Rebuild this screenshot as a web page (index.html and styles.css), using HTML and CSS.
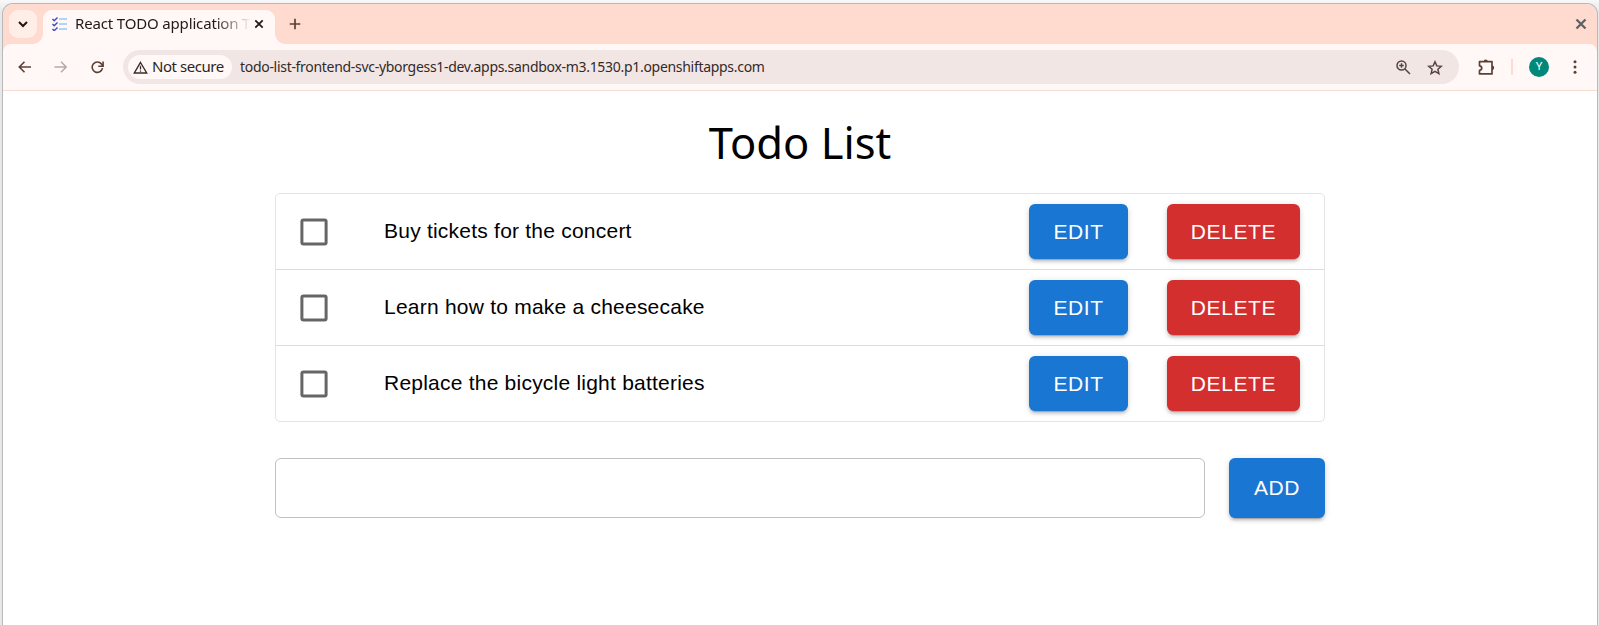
FILE: index.html
```
<!DOCTYPE html>
<html lang="en">
<head>
<meta charset="utf-8">
<title>React TODO application</title>
<link rel="stylesheet" href="styles.css">
</head>
<body>
<div class="window">
  <header class="tabs">
    <button class="tab-search" aria-label="Search tabs"><svg width="10" height="8" viewBox="0 0 10 8"><path d="M1 2l4 4 4-4" fill="none" stroke="#201512" stroke-width="2"/></svg></button>
    <div class="tab">
      <svg class="favicon" width="15" height="14" viewBox="0 0 15 14" fill="none"><path d="M.5 2l1.7 1.7L5.5.5M.5 7l1.7 1.7L5.5 5.5M.5 12l1.7 1.7 3.3-3.2" stroke="#4048b8" stroke-width="1.4"/><path d="M7 2h8M7 7h8M7 12h8" stroke="#90caf9" stroke-width="1.5"/></svg>
      <span class="tab-title">React TODO application T</span>
      <svg width="10" height="10" viewBox="0 0 10 10"><path d="M1.3 1.3l7.4 7.4m0-7.4L1.3 8.7" stroke="#201a19" stroke-width="1.8"/></svg>
    </div>
    <svg class="plus" width="12" height="12" viewBox="0 0 12 12"><path d="M6 .7v10.6M.7 6h10.6" stroke="#5c4037" stroke-width="1.7"/></svg>
    <svg class="close" width="12" height="12" viewBox="0 0 12 12"><path d="M1.5 1.5l9 9m0-9l-9 9" stroke="#5e6163" stroke-width="2.3"/></svg>
  </header>
  <nav class="toolbar">
    <svg class="back" width="14" height="12" viewBox="0 0 14 12"><path d="M13 6H2M6.5.8L1.3 6l5.2 5.2" fill="none" stroke="#5c4037" stroke-width="1.6"/></svg>
    <svg class="forward" width="14" height="12" viewBox="0 0 14 12"><path d="M.5 6h11.8M7 .8L12.2 6 7 11.2" fill="none" stroke="#b8a9a5" stroke-width="1.5"/></svg>
    <svg class="reload" width="13" height="13" viewBox="0 0 13 13"><path d="M11.5 7.2A5.2 5.2 0 1 1 10.5 3L12 4.8M12.1.5v4.7H7.3" fill="none" stroke="#5c4037" stroke-width="1.6"/></svg>
    <div class="address">
      <span class="security"><svg width="15" height="13" viewBox="0 0 15 13"><path d="M7.5 1.5L13.7 12H1.3z" fill="none" stroke="#3b2c28" stroke-width="1.4"/><path d="M7.5 4.8v3.7m0 1v1.3" stroke="#3b2c28" stroke-width="1.3"/></svg><span class="security-text">Not secure</span></span>
      <span class="url">todo-list-frontend-svc-yborgess1-dev.apps.sandbox-m3.1530.p1.openshiftapps.com</span>
      <svg class="magnifier" width="15" height="15" viewBox="0 0 15 15" fill="none" stroke="#554440" stroke-width="1.5"><circle cx="5.5" cy="5.5" r="4.5"/><path d="M9 9l5 5M3.2 5.5h4.6M5.5 3.2v4.6"/></svg>
      <svg width="16" height="15" viewBox="0 0 16 15"><path d="M8 1.8l1.8 4.1 4.5.4-3.4 3 1 4.3L8 11.3l-3.9 2.3 1-4.3-3.4-3 4.5-.4z" fill="none" stroke="#554440" stroke-width="1.5"/></svg>
    </div>
    <svg class="puzzle" width="17" height="16" viewBox="0 0 17 16"><path d="M1.5 2.7H14V14.9H1.5v-3.5c3-.4 3-4.2 0-4.6z" fill="none" stroke="#5c4037" stroke-width="1.7" stroke-linejoin="round"/><path d="M5.6 2.5a2.1 2.1 0 0 1 4.2 0zM14 6.6a2.2 2.2 0 0 1 0 4.4z" fill="#5c4037"/></svg>
    <span class="separator"></span>
    <span class="avatar">Y</span>
    <svg class="dots" width="4" height="14" viewBox="0 0 4 14" fill="#5c4037"><circle cx="2" cy="1.7" r="1.5"/><circle cx="2" cy="7" r="1.5"/><circle cx="2" cy="12.3" r="1.5"/></svg>
  </nav>
  <main class="page">
    <h1 class="title">Todo List</h1>
    <section class="list">
      <div class="row"><svg class="checkbox" width="28" height="28" viewBox="0 0 28 28"><rect x="1.9" y="1.9" width="24.2" height="24.2" rx="1.5"/></svg><span class="task">Buy tickets for the concert</span><button class="button">EDIT</button><button class="button delete">DELETE</button></div>
      <div class="row"><svg class="checkbox" width="28" height="28" viewBox="0 0 28 28"><rect x="1.9" y="1.9" width="24.2" height="24.2" rx="1.5"/></svg><span class="task">Learn how to make a cheesecake</span><button class="button">EDIT</button><button class="button delete">DELETE</button></div>
      <div class="row"><svg class="checkbox" width="28" height="28" viewBox="0 0 28 28"><rect x="1.9" y="1.9" width="24.2" height="24.2" rx="1.5"/></svg><span class="task">Replace the bicycle light batteries</span><button class="button">EDIT</button><button class="button delete">DELETE</button></div>
    </section>
    <form class="new-task"><input class="input" type="text" aria-label="New task"><button class="button add" type="button">ADD</button></form>
  </main>
</div>
</body>
</html>
```
FILE: styles.css
```
* { box-sizing: border-box; }
body { margin: 0; height: 625px; padding: 4px 2px 0 3px; overflow: hidden; background: linear-gradient(#f8f8f8, #e8e8e8 12px); font-family: "Noto Sans", sans-serif; }
svg { display: block; flex: none; }
button { border: 0; padding: 0; }
.window { height: 621px; background: linear-gradient(#ffdbcf 60px, #fff 60px); border-radius: 10px 10px 0 0; box-shadow: 0 0 0 1px #b9b9b9; overflow: hidden; }
.tabs { height: 40px; display: flex; align-items: center; padding: 0 10px 0 6px; }
.tab-search { width: 28px; height: 28px; margin-right: 6px; border-radius: 9px; background: #ffede7; display: flex; align-items: center; justify-content: center; }
.tab { position: relative; width: 232px; height: 34px; align-self: flex-end; padding: 0 11px 6px 9px; display: flex; align-items: center; border-radius: 9px 9px 0 0; background: #fff8f6; }
.tab::before, .tab::after { content: ""; position: absolute; bottom: 0; width: 10px; height: 10px; }
.tab::before { right: 100%; background: radial-gradient(circle at 0 0, transparent 9.5px, #fff8f6 10px); }
.tab::after { left: 100%; background: radial-gradient(circle at 100% 0, transparent 9.5px, #fff8f6 10px); }
.tab-title { margin: -2px auto 0 8px; white-space: nowrap; font-size: 15px; line-height: 22px; color: #201a19; letter-spacing: -.16px; -webkit-mask-image: linear-gradient(90deg, #000 140px, transparent 176px); mask-image: linear-gradient(90deg, #000 140px, transparent 176px); }
.plus { margin-left: 14px; }
.close { margin-left: auto; }
.toolbar { height: 47px; display: flex; align-items: center; padding-right: 20px; border-bottom: 1px solid #f7ddd6; border-radius: 8px 8px 0 0; background: #fff8f6; }
.back { margin-left: 15px; }
.forward { margin-left: 22px; }
.reload { margin-left: 23px; }
.address { width: 1336px; height: 34px; margin-left: 19px; padding: 0 16px 0 5px; display: flex; align-items: center; border-radius: 17px; background: #f2e6e5; }
.security { width: 104px; height: 24px; padding-left: 5px; display: flex; align-items: center; border-radius: 12px; background: #fff8f6; font-size: 15px; color: #2d2422; }
.security-text { margin: -2px 0 0 4px; white-space: nowrap; letter-spacing: -.45px; }
.url { margin: -1px 0 0 8px; white-space: nowrap; font-size: 14px; letter-spacing: -.3px; color: #332a28; }
.magnifier { margin: 0 16px 0 auto; }
.puzzle { margin-left: 19px; }
.separator { width: 2px; height: 16px; margin-left: 16px; background: #ffdbcf; }
.avatar { width: 20px; height: 20px; margin-left: 16px; border-radius: 50%; background: #00897b; color: #fff; font: 11px/20px Roboto, sans-serif; text-align: center; }
.dots { margin-left: auto; }
.page { width: 1050px; margin-left: 272px; }
.title { height: 60px; margin: 21px 0; font-size: 43.5px; font-weight: 400; line-height: 60px; text-align: center; color: #000; }
.list { border: 1px solid #e4e4e4; border-radius: 5px; }
.row { height: 76px; padding: 0 24px; display: flex; align-items: center; border-top: 1px solid #dedede; }
.row:first-child { border-top: 0; height: 75px; }
.checkbox { fill: none; stroke: #666; stroke-width: 3; }
.task { margin: -1px auto 0 56px; font: 21px/30px "Liberation Sans", Arial, sans-serif; letter-spacing: .225px; color: #000; }
.button { width: 99px; height: 54.75px; border-radius: 6px; background: #1976d2; color: #fff; font: 21px/54px "Liberation Sans", Arial, sans-serif; letter-spacing: .6px; box-shadow: 0 4px 1px -3px #0003, 0 3px 3px #00000024, 0 1px 7px #0000001f; }
.row .button { margin-top: -.5px; padding-top: 1px; }
.row .delete { width: 133px; margin-left: 39px; background: #d32f2f; }
.new-task { margin: 36px 0 0; display: flex; justify-content: space-between; }
.input { width: 930px; height: 60px; border: 1px solid #c0c0c0; border-radius: 6px; outline: none; background: #fff; }
.add { width: 96px; height: 60px; line-height: 60px; }
```
